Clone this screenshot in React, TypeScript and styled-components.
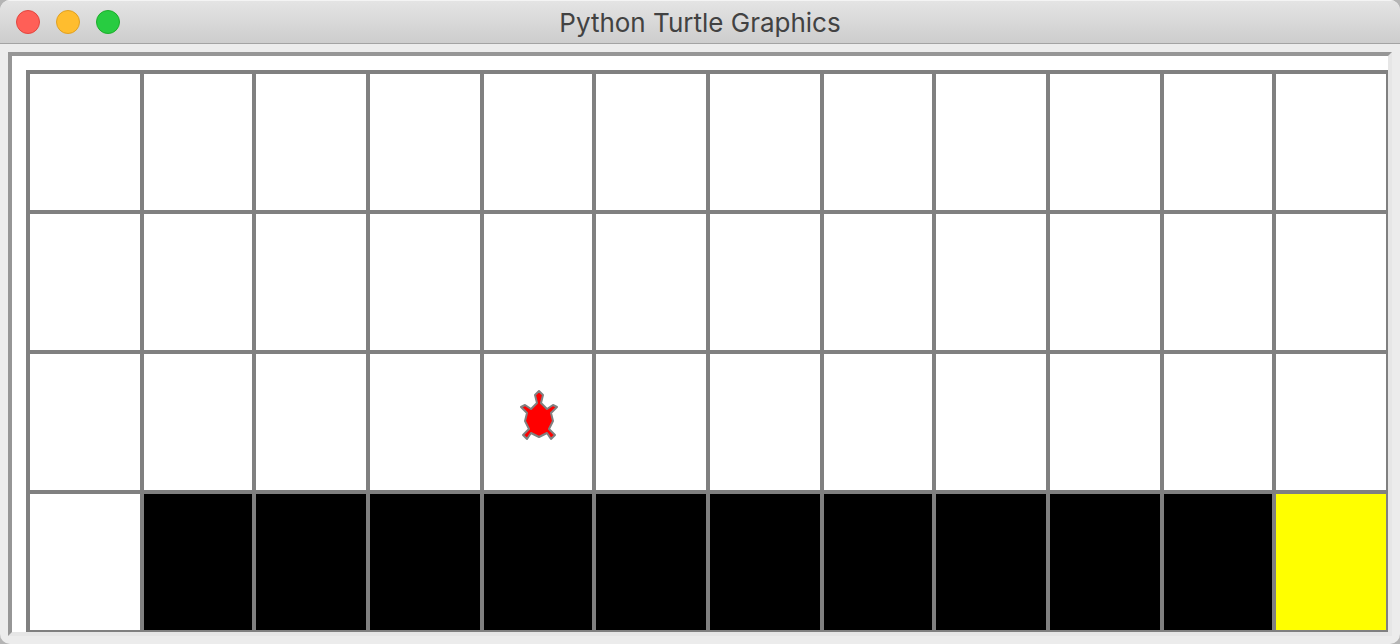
import React from "react";
import styled, { createGlobalStyle } from "styled-components";

const GlobalStyle = createGlobalStyle`
  *, *::before, *::after { box-sizing: border-box; }
  body { margin: 0; background: #b4b4b4; }
`;

const Window = styled.div`
  display: flex;
  flex-direction: column;
  min-height: 100vh;
  overflow: hidden;
  border-radius: 10px;
  background: #ececec;
`;

const TitleBar = styled.header`
  display: grid;
  grid-template-columns: 1fr auto 1fr;
  align-items: center;
  height: 44px;
  padding: 0 16px;
  border-top: 1px solid #f4f4f4;
  border-bottom: 1px solid #a3a3a3;
  background: linear-gradient(#e4e4e4, #cdcdcd);
`;

const Controls = styled.div`
  display: flex;
  gap: 16px;
`;

const Light = styled.button<{ $fill: string; $edge: string }>`
  width: 24px;
  height: 24px;
  padding: 0;
  border: 1px solid ${(p) => p.$edge};
  border-radius: 50%;
  background: ${(p) => p.$fill};
`;

const Title = styled.h1`
  margin: 0;
  padding-top: 2px;
  color: #424242;
  font: 400 26px/32px Inter, "Liberation Sans", sans-serif;
`;

const Content = styled.main`
  display: flex;
  flex: 1;
  padding: 8px;
`;

const Canvas = styled.div`
  display: flex;
  flex: 1;
  padding: 14px 0 0 14px;
  border: 4px solid;
  border-color: #969696 #e6e6e6 #e6e6e6 #969696;
  background: #fff;
`;

const Board = styled.div`
  display: grid;
  flex: 1;
  grid-template-columns: 110fr 108fr repeat(3, 110fr 110fr 108fr) 110fr;
  grid-template-rows: repeat(4, minmax(60px, 1fr));
  gap: 4px;
  padding: 4px 2px 2px 4px;
  background: #808080;
`;

const Cell = styled.div<{ $color: string }>`
  display: flex;
  align-items: center;
  justify-content: center;
  background: ${(p) => p.$color};
`;

const lights = [
  { name: "Close", fill: "#ff5f57", edge: "#e2463f" },
  { name: "Minimize", fill: "#ffbd2e", edge: "#dfa023" },
  { name: "Zoom", fill: "#28cc41", edge: "#1dad2b" },
];

const colors: Record<string, string> = { ".": "#fff", T: "#fff", "#": "#000", G: "#ff0" };
const world = ["............", "............", "....T.......", ".##########G"];

const Turtle = () => (
  <svg width="40" height="64" viewBox="-21 -33 40 64" role="img" aria-label="Turtle" overflow="visible">
    <path
      d="M0-32L-4-28L-2-20L-8-14L-14-18L-18-16L-12-10L-14-2L-10 6L-16 12L-12 16L-8 10L0 14L8 10L12 16L16 12L10 6L14-2L12-10L18-16L14-18L8-14L2-20L4-28Z"
      fill="#f00"
      stroke="#808080"
      strokeWidth="2"
      strokeLinejoin="round"
    />
  </svg>
);

export default function App() {
  return (
    <>
      <GlobalStyle />
      <Window>
        <TitleBar>
          <Controls>
            {lights.map((l) => (
              <Light key={l.name} type="button" aria-label={l.name} $fill={l.fill} $edge={l.edge} />
            ))}
          </Controls>
          <Title>Python Turtle Graphics</Title>
        </TitleBar>
        <Content>
          <Canvas>
            <Board>
              {world.flatMap((row, y) =>
                [...row].map((kind, x) => (
                  <Cell key={`${x}-${y}`} $color={colors[kind]}>
                    {kind === "T" && <Turtle />}
                  </Cell>
                ))
              )}
            </Board>
          </Canvas>
        </Content>
      </Window>
    </>
  );
}
